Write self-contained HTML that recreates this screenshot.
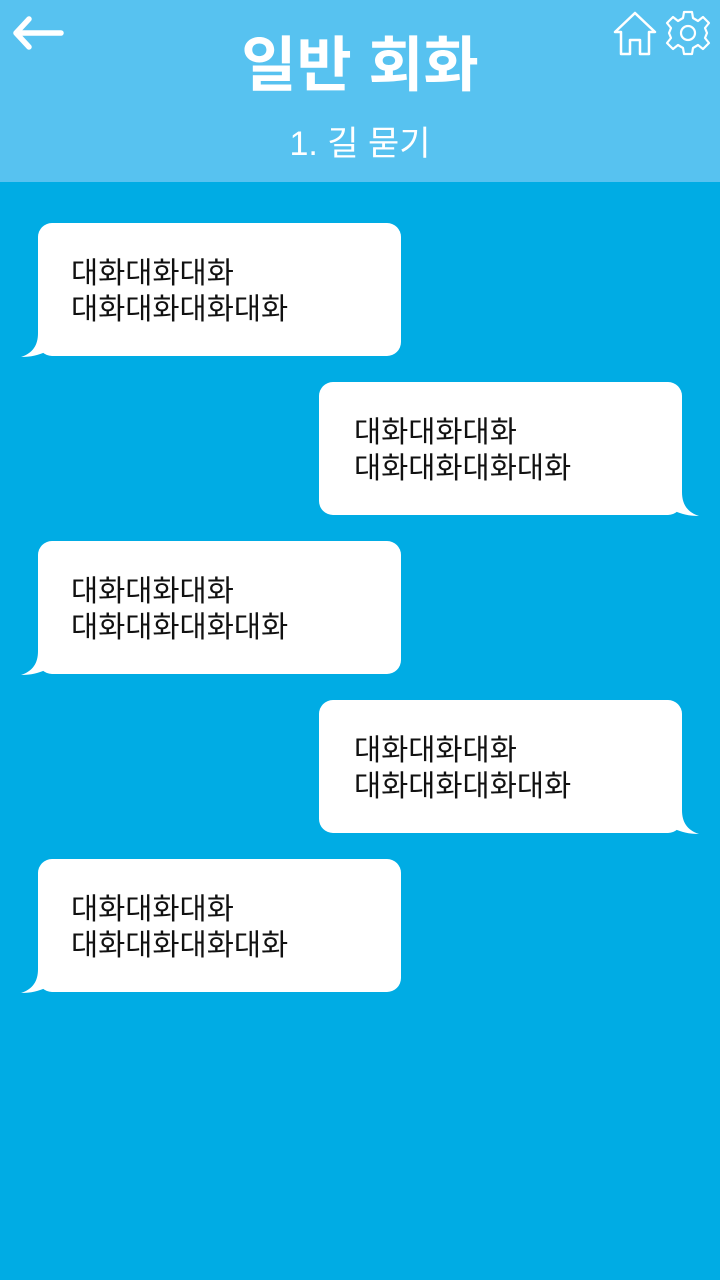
<!DOCTYPE html>
<html><head><meta charset="utf-8"><style>
*{margin:0;padding:0;box-sizing:border-box}
body{width:720px;height:1280px;background:#00ace4;position:relative;overflow:hidden;font-family:"Liberation Sans","Noto Sans CJK KR",sans-serif}
.hdr{position:absolute;left:0;top:0;width:720px;height:182px;background:#57c2f0}
.title{position:absolute;left:0;width:720px;top:26px;text-align:center;color:#fff;font-size:60px;font-weight:bold;line-height:80px}
.sub{position:absolute;left:0;width:720px;top:120px;text-align:center;color:#fff;font-size:34px;line-height:48px}
.b{position:absolute;width:363px;height:133px;background:#fff;border-radius:14px;font-size:29.5px;line-height:36px;color:#111;padding:33px 0 0 33px;white-space:nowrap}
.b svg{position:absolute;bottom:-1px}
.l{left:38px}.r{left:319px;padding-left:35px}
</style></head><body>
<div class="hdr">
<svg style="position:absolute;left:12px;top:14px" width="52" height="38" viewBox="0 0 52 38"><path d="M4 19H49M4 19L17 5M4 19L17 33" stroke="#fff" stroke-width="5.5" fill="none" stroke-linecap="round" stroke-linejoin="round"/></svg>
<div class="title">일반 회화</div>
<div class="sub">1. 길 묻기</div>
<svg style="position:absolute;left:612px;top:10px" width="46" height="46" viewBox="0 0 46 46"><path d="M3 22L23 3L43 22H37V44H28V30H18V44H9V22Z" stroke="#fff" stroke-width="2.5" fill="none" stroke-linejoin="round"/></svg>
<svg style="position:absolute;left:665px;top:10px" width="46" height="46" viewBox="-23 -23 46 46"><path d="M-4 -21L4 -21L5 -15L10 -12L15 -16L21 -10L17 -5L19 0L17 5L21 10L15 16L10 12L5 15L4 21L-4 21L-5 15L-10 12L-15 16L-21 10L-17 5L-19 0L-17 -5L-21 -10L-15 -16L-10 -12L-5 -15Z" stroke="#fff" stroke-width="2.2" fill="none" stroke-linejoin="round"/><circle r="7" stroke="#fff" stroke-width="2.2" fill="none"/></svg>
</div>
<div class="b l" style="top:223px">대화대화대화<br>대화대화대화대화<svg style="left:-17px" width="30" height="24" viewBox="0 0 30 24"><path d="M17 0C17 12 12 20 0 24C10 24 18 22 24 19L30 22V0Z" fill="#fff"/></svg></div>
<div class="b r" style="top:382px">대화대화대화<br>대화대화대화대화<svg style="right:-17px" width="30" height="24" viewBox="0 0 30 24"><path d="M13 0C13 12 18 20 30 24C20 24 12 22 6 19L0 22V0Z" fill="#fff"/></svg></div>
<div class="b l" style="top:541px">대화대화대화<br>대화대화대화대화<svg style="left:-17px" width="30" height="24" viewBox="0 0 30 24"><path d="M17 0C17 12 12 20 0 24C10 24 18 22 24 19L30 22V0Z" fill="#fff"/></svg></div>
<div class="b r" style="top:700px">대화대화대화<br>대화대화대화대화<svg style="right:-17px" width="30" height="24" viewBox="0 0 30 24"><path d="M13 0C13 12 18 20 30 24C20 24 12 22 6 19L0 22V0Z" fill="#fff"/></svg></div>
<div class="b l" style="top:859px">대화대화대화<br>대화대화대화대화<svg style="left:-17px" width="30" height="24" viewBox="0 0 30 24"><path d="M17 0C17 12 12 20 0 24C10 24 18 22 24 19L30 22V0Z" fill="#fff"/></svg></div>
</body></html>
